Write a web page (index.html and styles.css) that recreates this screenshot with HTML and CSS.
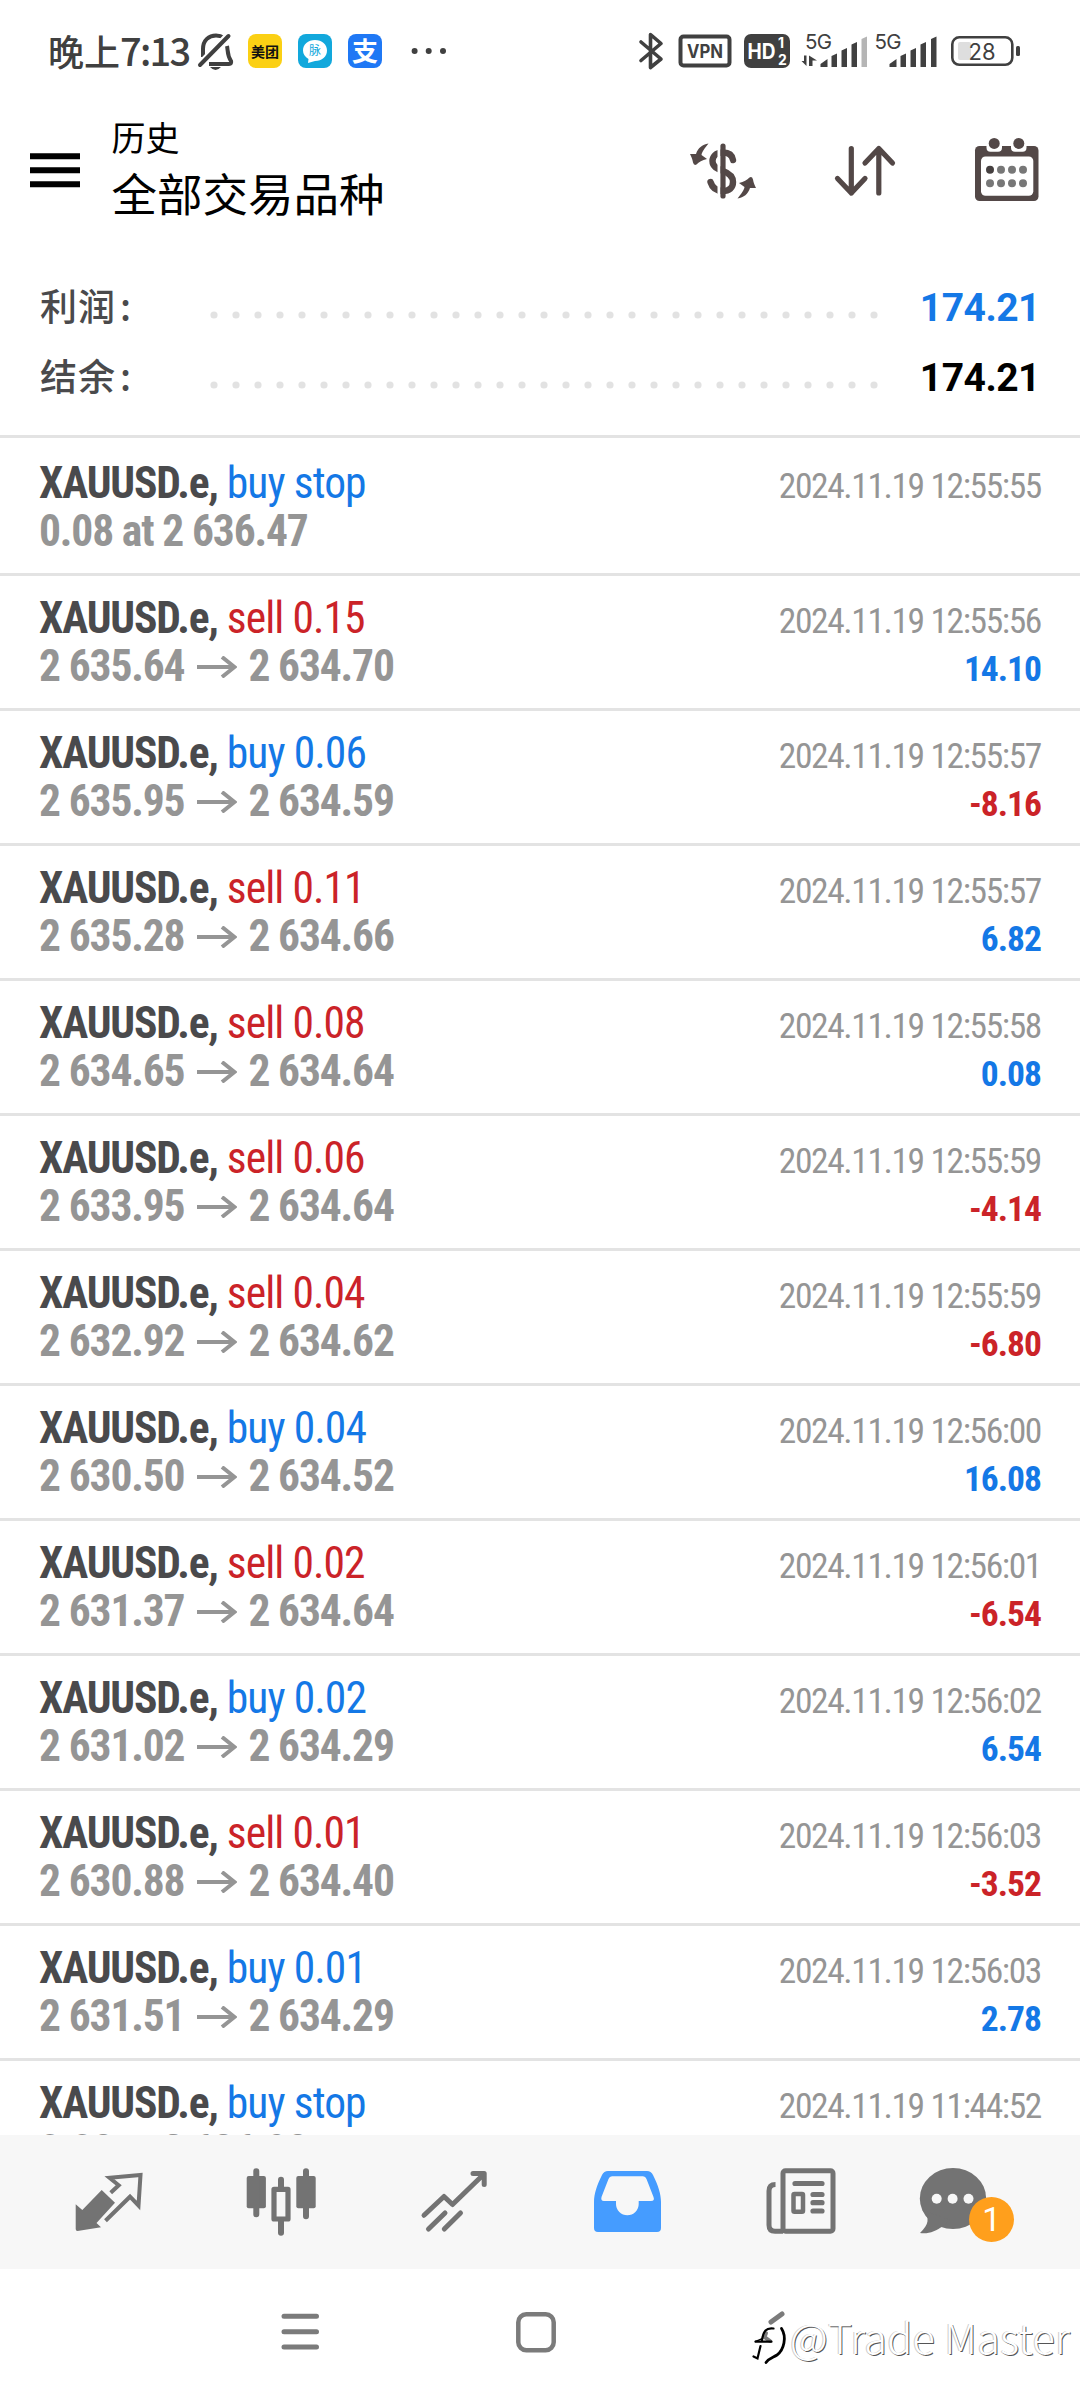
FILE: index.html
```html
<!DOCTYPE html>
<html lang="zh-CN">
<head>
<meta charset="utf-8">
<title>历史</title>
<link rel="stylesheet" href="styles.css">
</head>
<body>
<div class="screen">
  <div class="status">
    <span class="clock">晚上<span class="clock-digits">7:13</span></span>
    <svg class="bell" viewBox="196 30 40 42" fill="none" stroke="#404040" stroke-width="4">
      <path d="M203 57V49C203 40 209 35.5 216 35.5C219 35.5 222 36.5 224 38M227 46C228 50 227 55 231 61Q232 64 229 64H209"/>
      <path d="M200 65L228 36" stroke-linecap="round" stroke="#fff" stroke-width="8"/>
      <path d="M200 65L228.500 36" stroke-linecap="round"/>
      <path d="M210 67H221Q215.500 73 210 67Z" fill="#404040" stroke="none"/>
    </svg>
    <span class="app app-meituan">美团</span>
    <span class="app app-maimai"><svg viewBox="0 0 34 34"><path d="M17 6C24 6 29 10.500 29 16.500S24 27 17 27L10 29 10.500 25C7 23 5 20 5 16.500C5 10.500 10 6 17 6Z" fill="#fff"/><text x="17" y="21" text-anchor="middle" class="mai">脉</text></svg></span>
    <span class="app app-alipay">支</span>
    <svg class="more" viewBox="410 30 38 42" fill="#404040"><circle cx="414.600" cy="51" r="3"/><circle cx="428.700" cy="51" r="3"/><circle cx="443" cy="51" r="3"/></svg>
    <span class="spacer"></span>
    <svg class="w36" viewBox="636 30 36 42" fill="none" stroke="#404040" stroke-width="3.600" stroke-linejoin="round" stroke-linecap="round"><path d="M641 42L661 59L650.500 67.500V34.500L661 43.500L641 60.500"/></svg>
    <svg class="w66" viewBox="672 30 66 42"><rect x="680.500" y="36.500" width="49" height="29" rx="3" fill="none" stroke="#404040" stroke-width="4"/><text x="705" y="58" text-anchor="middle" textLength="36" lengthAdjust="spacingAndGlyphs" class="badge-text" fill="#404040">VPN</text></svg>
    <svg class="w58" viewBox="738 30 58 42"><rect x="744" y="34" width="46" height="34" rx="7" fill="#404040"/><text x="747.500" y="59" textLength="28" lengthAdjust="spacingAndGlyphs" class="badge-text hd" fill="#fff">HD</text><text x="778" y="48" class="sim" fill="#fff">1</text><text x="778" y="65" class="sim" fill="#fff">2</text></svg>
    <svg class="w74" viewBox="796 30 74 42" fill="#404040"><text x="805" y="49" class="net" textLength="27">5G</text><path d="M806.500 55.500V66L801.500 61H804V55.500ZM809 66V55.500L817 60.500H812.500V66Z"/><path d="M820.500 67V64L827.500 59V67ZM831.500 67V56L837 53.500V67ZM841.500 67V50.500L847 48V67ZM851.500 67V44.500L857 42V67Z"/><path d="M861.500 67V39L867 36.500V67Z" fill="#b5b5b5"/></svg>
    <svg class="w74" viewBox="870 30 74 42" fill="#404040"><text x="874.500" y="49" class="net" textLength="27">5G</text><path d="M889.500 67V64L896.500 59V67ZM900.500 67V56L906 53.500V67ZM910.500 67V50.500L916 48V67ZM920.500 67V44.500L926 42V67ZM931 67V39L936.500 36.500V67Z"/></svg>
    <svg class="w82" viewBox="944 30 82 42"><rect x="952.300" y="37.300" width="60" height="27.500" rx="7" fill="none" stroke="#404040" stroke-width="2.600"/><rect x="958" y="42" width="13" height="18" rx="2" fill="#dedede"/><rect x="1016" y="46" width="4" height="10" rx="1.500" fill="#404040"/><text x="982" y="59.500" text-anchor="middle" textLength="27" lengthAdjust="spacingAndGlyphs" class="battery">28</text></svg>
  </div>

  <header class="header">
    <svg class="menu" viewBox="0 0 50 36"><path d="M0 3.200H50M0 17.200H50M0 31.200H50" stroke="#000" stroke-width="6"/></svg>
    <div class="titles">
      <div class="subtitle">历史</div>
      <div class="title">全部交易品种</div>
    </div>
    <svg class="tool" viewBox="682 132 80 78">
      <path d="M732 160C731 154 727 152.500 722 152.500C714.500 152.500 711.500 157 711.500 161C711.500 167 717 169 722 171C729 173.500 732 177 732 182C732 188 728 191 722 191C715 191 711 187 709.500 182" fill="none" stroke="#534847" stroke-width="6.400" stroke-linecap="round"/>
      <path d="M716.500 142H719.500V200H716.500Z" fill="#fff"/>
      <path d="M722 146V196" stroke="#534847" stroke-width="5.200" stroke-linecap="round"/>
      <g fill="#534847"><path id="swap" d="M707.500 143.500C703 149 701 152 700.500 155L706 159C701 160 698 162 695.500 164.500Q693 166 692 162.500C691.500 159 690 156 689 154L695 154C697 148 701 144.500 707.500 143.500Z"/><use href="#swap" transform="rotate(180 722 171)"/></g>
    </svg>
    <svg class="tool" viewBox="825 132 80 78" fill="none" stroke="#534847" stroke-width="5.200" stroke-linecap="round" stroke-linejoin="round"><path d="M851.300 148.500V193L837.500 178.500M851.300 193L865 178.500M878.800 193V148.500L865 163M878.800 148.500L892.500 163"/></svg>
    <svg class="tool" viewBox="966 132 80 78">
      <rect x="975" y="146" width="63.500" height="55" rx="4.500" fill="#534847"/>
      <rect x="981" y="156.500" width="52.300" height="39.200" rx="4.500" fill="#fff"/>
      <rect x="986.500" y="136" width="15.500" height="15.700" rx="4" fill="#fff"/><rect x="1011" y="136" width="15.500" height="15.700" rx="4" fill="#fff"/>
      <circle cx="994.200" cy="143.400" r="5.500" fill="#534847"/><circle cx="1018.800" cy="143.400" r="5.500" fill="#534847"/>
      <g fill="#777"><circle cx="990" cy="169.700" r="4" fill="#453f3f"/><circle cx="1001" cy="169.700" r="4"/><circle cx="1012" cy="169.700" r="4"/><circle cx="1023" cy="169.700" r="4"/><circle cx="990" cy="183.300" r="4"/><circle cx="1001" cy="183.300" r="4"/><circle cx="1012" cy="183.300" r="4"/><circle cx="1023" cy="183.300" r="4"/></g>
    </svg>
  </header>

  <section class="summary">
    <div class="sum-row"><span class="sum-label">利润<i>:</i></span><svg class="leader" viewBox="0 0 668 8"><path d="M4 4H665" /></svg><span class="sum-value up">174.21</span></div>
    <div class="sum-row"><span class="sum-label">结余<i>:</i></span><svg class="leader" viewBox="0 0 668 8"><path d="M4 4H665" /></svg><span class="sum-value">174.21</span></div>
  </section>

  <svg class="defs"><symbol id="arrow" viewBox="0 0 40 22"><path d="M0 11H37M25 1L37.500 11L25 21" fill="none" stroke="#959595" stroke-width="4"/></symbol></svg>

  <main class="list">
    <div class="deal first"><div class="sym">XAUUSD.e, <span class="up">buy stop</span></div><div class="date">2024.11.19 12:55:55</div><div class="price">0.08 at 2 636.47</div></div>
    <div class="deal"><div class="sym">XAUUSD.e, <span class="down">sell 0.15</span></div><div class="date">2024.11.19 12:55:56</div><div class="price">2 635.64<svg class="arrow"><use href="#arrow"/></svg>2 634.70</div><div class="profit up">14.10</div></div>
    <div class="deal"><div class="sym">XAUUSD.e, <span class="up">buy 0.06</span></div><div class="date">2024.11.19 12:55:57</div><div class="price">2 635.95<svg class="arrow"><use href="#arrow"/></svg>2 634.59</div><div class="profit down">-8.16</div></div>
    <div class="deal"><div class="sym">XAUUSD.e, <span class="down">sell 0.11</span></div><div class="date">2024.11.19 12:55:57</div><div class="price">2 635.28<svg class="arrow"><use href="#arrow"/></svg>2 634.66</div><div class="profit up">6.82</div></div>
    <div class="deal"><div class="sym">XAUUSD.e, <span class="down">sell 0.08</span></div><div class="date">2024.11.19 12:55:58</div><div class="price">2 634.65<svg class="arrow"><use href="#arrow"/></svg>2 634.64</div><div class="profit up">0.08</div></div>
    <div class="deal"><div class="sym">XAUUSD.e, <span class="down">sell 0.06</span></div><div class="date">2024.11.19 12:55:59</div><div class="price">2 633.95<svg class="arrow"><use href="#arrow"/></svg>2 634.64</div><div class="profit down">-4.14</div></div>
    <div class="deal"><div class="sym">XAUUSD.e, <span class="down">sell 0.04</span></div><div class="date">2024.11.19 12:55:59</div><div class="price">2 632.92<svg class="arrow"><use href="#arrow"/></svg>2 634.62</div><div class="profit down">-6.80</div></div>
    <div class="deal"><div class="sym">XAUUSD.e, <span class="up">buy 0.04</span></div><div class="date">2024.11.19 12:56:00</div><div class="price">2 630.50<svg class="arrow"><use href="#arrow"/></svg>2 634.52</div><div class="profit up">16.08</div></div>
    <div class="deal"><div class="sym">XAUUSD.e, <span class="down">sell 0.02</span></div><div class="date">2024.11.19 12:56:01</div><div class="price">2 631.37<svg class="arrow"><use href="#arrow"/></svg>2 634.64</div><div class="profit down">-6.54</div></div>
    <div class="deal"><div class="sym">XAUUSD.e, <span class="up">buy 0.02</span></div><div class="date">2024.11.19 12:56:02</div><div class="price">2 631.02<svg class="arrow"><use href="#arrow"/></svg>2 634.29</div><div class="profit up">6.54</div></div>
    <div class="deal"><div class="sym">XAUUSD.e, <span class="down">sell 0.01</span></div><div class="date">2024.11.19 12:56:03</div><div class="price">2 630.88<svg class="arrow"><use href="#arrow"/></svg>2 634.40</div><div class="profit down">-3.52</div></div>
    <div class="deal"><div class="sym">XAUUSD.e, <span class="up">buy 0.01</span></div><div class="date">2024.11.19 12:56:03</div><div class="price">2 631.51<svg class="arrow"><use href="#arrow"/></svg>2 634.29</div><div class="profit up">2.78</div></div>
    <div class="deal"><div class="sym">XAUUSD.e, <span class="up">buy stop</span></div><div class="date">2024.11.19 11:44:52</div><div class="price">0.08 at 2 636.98</div></div>
  </main>

  <nav class="tabs">
    <svg class="tab" viewBox="22 2162 172 80"><path d="M75.700 2204.300L82.300 2210L101.700 2190L115 2202.700L96.500 2223L101 2227.300L77.500 2231Q75.700 2231 75.700 2229Z" fill="#737373"/><path d="M110.700 2192.700L118.700 2185.300L109.500 2177.800L140.500 2175L138.500 2205.500L130 2196.700L105.500 2220.700" fill="none" stroke="#737373" stroke-width="4"/></svg>
    <svg class="tab" viewBox="194 2162 172 80"><g fill="#737373"><rect x="246.700" y="2176" width="19.200" height="32.300" rx="2"/><rect x="296.300" y="2176" width="19.400" height="32.300" rx="2"/></g><rect x="274" y="2189.400" width="14" height="29.600" fill="none" stroke="#737373" stroke-width="5.200" stroke-linejoin="round"/><path d="M256.300 2171.300V2214.200M306 2171.300V2216.200M281 2179.700V2188M281 2221V2232.800" stroke="#737373" stroke-width="6" stroke-linecap="round"/></svg>
    <svg class="tab" viewBox="366 2162 172 80" fill="none" stroke="#737373" stroke-width="5" stroke-linecap="round" stroke-linejoin="round"><path d="M424 2215.300L444 2196.500L452.500 2204.500L484 2174M473 2173.500H484.200V2184.500"/><path d="M445 2213L428.500 2229M460.500 2213L444.300 2229"/></svg>
    <svg class="tab" viewBox="538 2162 172 80"><path fill-rule="evenodd" fill="#459cff" d="M608 2171H647Q651 2171 653 2175C658 2185 661 2194 661 2202V2228Q661 2232 657 2232H598Q594 2232 594 2228V2202C594 2194 597 2185 602 2175Q604 2171 608 2171ZM612 2176.300Q609.500 2176.300 608.500 2179L601.500 2197Q600.500 2201 604 2201H616V2204A11.300 11.300 0 0 0 638.700 2204V2201H651Q655 2201 653.500 2197L646.500 2179Q645.500 2176.300 643 2176.300Z"/></svg>
    <svg class="tab" viewBox="710 2162 172 80" fill="none" stroke="#737373" stroke-width="5"><rect x="783" y="2170.700" width="50" height="60.500" rx="2.500"/><path d="M775.500 2184.500Q769 2184.500 769 2191V2225Q769 2231.300 775 2231.300H783"/><path d="M795 2183.500H822M813 2194.500H822M813 2202.700H822M813 2211H822" stroke-width="5.200" stroke-linecap="round"/><rect x="793.500" y="2194" width="9.500" height="17.700" rx="1" stroke-width="4.500"/></svg>
    <div class="tab tab-chat">
      <svg viewBox="882 2162 172 80"><g fill="#737373"><ellipse cx="953" cy="2198.500" rx="33.200" ry="30.500"/><path d="M923 2210C930 2218 929 2224 920 2233C928 2234.500 936 2231 943 2226L950 2220Z"/></g><g fill="#f7f7f7"><circle cx="936.700" cy="2198.700" r="5"/><circle cx="952.600" cy="2198.700" r="5"/><circle cx="968.500" cy="2198.700" r="5"/></g></svg>
      <span class="count">1</span>
    </div>
  </nav>

  <div class="sysnav">
    <svg class="sys-recents" viewBox="0 0 39 38"><path d="M3 3.300H35.500M3 18.700H35.500M3 34H35.500" stroke="#7b7b7b" stroke-width="5" stroke-linecap="round"/></svg>
    <svg class="sys-home" viewBox="0 0 42 42"><rect x="3.300" y="3.300" width="35.400" height="36" rx="8" fill="none" stroke="#7b7b7b" stroke-width="4.500"/></svg>
    <div class="watermark">
      <svg class="mark" viewBox="750 2305 40 62" fill="none" stroke-linecap="round">
        <path d="M782 2314L771 2322" stroke="#7b7b7b" stroke-width="5"/>
        <path d="M766 2333L764.500 2337L770 2341" stroke="#7b7b7b" stroke-width="4"/>
        <path d="M773.500 2328.500C766 2327.500 763.500 2331 762 2340M755.500 2341.700H771.500M760.500 2346L757.500 2358.500L753.500 2356.500" stroke="#000" stroke-width="2.200"/>
        <path d="M755.500 2341.500Q759 2340 761.500 2339" stroke="#000" stroke-width="1.500"/>
        <path d="M781.500 2328.500C787 2337 784 2350 777 2355C773 2357.500 769 2358 766 2362.500" stroke="#000" stroke-width="2.800"/>
      </svg>
      <span class="mark-text">@Trade Master</span>
    </div>
  </div>
</div>
</body>
</html>
```
FILE: styles.css
```css
* { box-sizing: border-box; }
body { margin: 0; background: #fff; }
svg { display: block; flex: none; }
i { font-style: normal; }

.screen {
  width: 1080px;
  height: 2400px;
  display: flex;
  flex-direction: column;
  overflow: hidden;
  font-family: Roboto, "Noto Sans CJK SC", sans-serif;
}
.spacer { flex: 1; }
.defs { width: 0; height: 0; }
.up { color: #1478e6; }
.down { color: #cb2328; }

/* status bar */
.status {
  flex: none;
  height: 102px;
  padding: 0 54px 0 48px;
  display: flex;
  align-items: center;
}
.status svg { height: 42px; }
.clock {
  width: 148px;
  margin-bottom: 3px;
  color: #404040;
  font: 500 36px/50px "Noto Sans CJK SC", sans-serif;
  white-space: nowrap;
}
.clock-digits { font-size: 38px; letter-spacing: -1.700px; }
.bell { width: 40px; margin-right: 12px; }
.app {
  width: 34px;
  height: 34px;
  margin-right: 16px;
  border-radius: 8px;
  text-align: center;
  font: 700 14px/34px "Noto Sans CJK SC", sans-serif;
}
.app svg { width: 34px; height: 34px; }
.app-meituan { background: #fbd014; color: #111; }
.app-maimai { background: #12a8dc; }
.app-alipay { background: #1f78f5; color: #fff; font-size: 26px; line-height: 31px; }
.mai { font: 400 12px "Noto Sans CJK SC", sans-serif; fill: #12a8dc; }
.more { width: 38px; margin-left: 12px; }
.w36 { width: 36px; }
.w66 { width: 66px; }
.w58 { width: 58px; }
.w74 { width: 74px; }
.w82 { width: 82px; }
.badge-text { font: 700 19px Inter, sans-serif; }
.hd { font-size: 21px; }
.sim { font: 700 14px Inter, sans-serif; }
.net { font: 400 20.500px Inter, sans-serif; }
.battery { font: 400 23px Inter, sans-serif; fill: #404040; }

/* header */
.header {
  flex: none;
  height: 138px;
  padding: 0 34px 0 30px;
  display: flex;
  align-items: center;
}
.menu { width: 50px; height: 36px; }
.titles {
  flex: 1;
  margin: 0 0 8px 31.500px;
  color: #000;
  font-family: "Noto Sans CJK SC", sans-serif;
}
.subtitle { font-size: 34px; line-height: 50px; }
.title { font-size: 45.500px; line-height: 60px; }
.tool { width: 80px; height: 78px; margin-left: 61.500px; }

/* totals */
.summary { flex: none; height: 195px; padding: 30px 40px 0; }
.sum-row { display: flex; align-items: baseline; height: 70px; line-height: 70px; }
.sum-label {
  width: 169.500px;
  color: #4a4a4c;
  font: 500 37px/70px "Noto Sans CJK SC", sans-serif;
  letter-spacing: 1px;
}
.sum-label i { margin-left: 4px; }
.leader { width: 668px; height: 8px; align-self: flex-start; margin-top: 40.500px; }
.leader path {
  fill: none;
  stroke: #e2e2e2;
  stroke-width: 7.200px;
  stroke-linecap: round;
  stroke-dasharray: 0 22;
}
.sum-value { margin-left: auto; font-size: 39px; font-weight: 700; color: #000; letter-spacing: -0.500px; }
.sum-value.up { color: #1478e6; }

/* deals */
.list { flex: 1; min-height: 0; overflow: hidden; }
.deal {
  height: 135px;
  padding: 19px 38px 0 39px;
  border-top: 3px solid #e3e3e3;
  display: grid;
  grid-template-columns: 1fr auto;
  grid-auto-rows: 48px;
  align-items: baseline;
  font: 43.500px/48px "Roboto Condensed", Roboto, sans-serif;
  letter-spacing: -1.150px;
  white-space: pre;
}
.deal.first { height: 138px; padding-top: 22px; }
.sym { color: #4a4a4c; font-weight: 700; }
.sym span { font-weight: 400; letter-spacing: -0.900px; }
.price { color: #959595; font-weight: 700; display: flex; }
.date { color: #959595; font-size: 35.500px; text-align: right; letter-spacing: -1.400px; padding-right: 1px; }
.profit { font-size: 35.500px; font-weight: 700; text-align: right; letter-spacing: -1px; padding-right: 1px; }
.arrow { width: 40px; height: 22px; margin: 12.500px 11.500px 0 12.500px; }

/* bottom tabs */
.tabs {
  flex: none;
  height: 134px;
  padding: 0 22px;
  display: flex;
  align-items: center;
  background: #f7f7f7;
}
.tab { width: 172px; height: 80px; }
.tab-chat { position: relative; }
.tab-chat svg { width: 172px; height: 80px; }
.count {
  position: absolute;
  left: 87px;
  top: 35px;
  width: 45px;
  height: 45px;
  border-radius: 50%;
  background: #ff9f1c;
  color: #fff;
  font-size: 33px;
  line-height: 45px;
  text-align: center;
}

/* system navigation */
.sysnav {
  position: relative;
  flex: none;
  height: 131px;
  padding: 0 0 5px 280.500px;
  display: flex;
  align-items: center;
}
.sys-recents { width: 39px; height: 38px; }
.sys-home { width: 42px; height: 42px; margin-left: 195px; }
.watermark {
  position: absolute;
  left: 750px;
  top: 36px;
  display: flex;
  align-items: center;
}
.mark { width: 40px; height: 62px; }
.mark-text {
  font: 300 41.500px/62px "Noto Sans CJK SC", sans-serif;
  letter-spacing: 0.200px;
  color: #fff;
  text-shadow: 1px 1px 0.500px #555, -1px 0 0 #ccc;
  white-space: nowrap;
}
```
